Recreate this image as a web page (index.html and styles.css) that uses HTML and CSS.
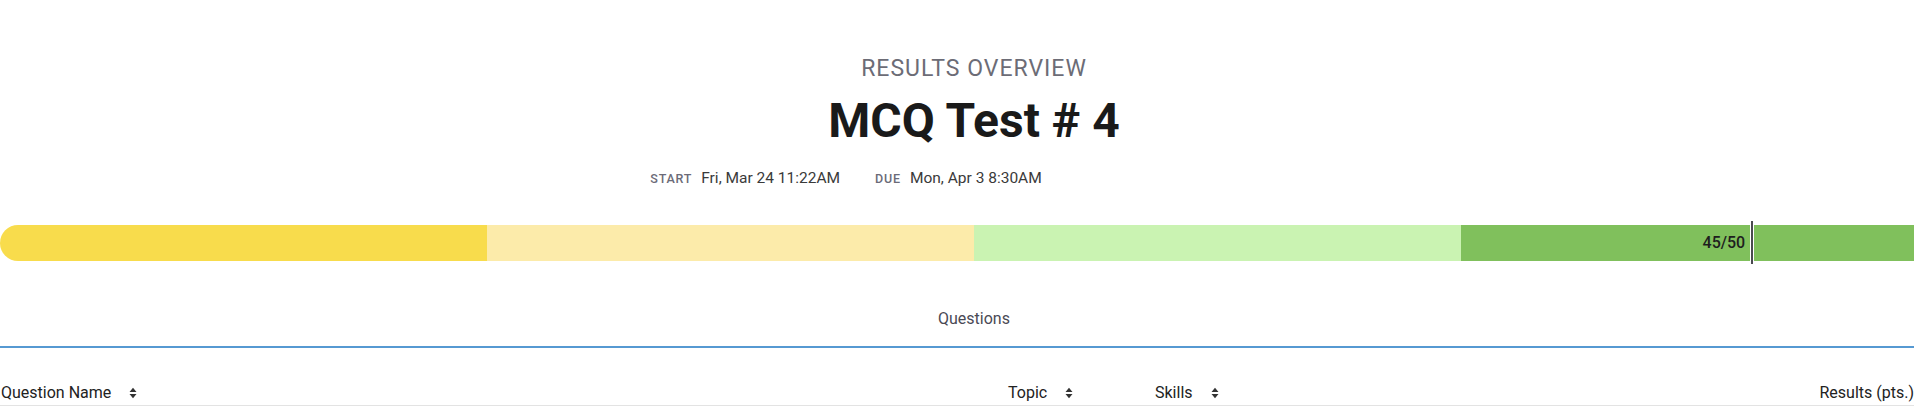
FILE: index.html
```html
<!DOCTYPE html>
<html lang="en">
<head>
<meta charset="utf-8">
<title>Results Overview</title>
<link rel="stylesheet" href="styles.css">
</head>
<body>
<div class="page">
  <header class="header">
    <div class="eyebrow">RESULTS OVERVIEW</div>
    <h1 class="title">MCQ Test # 4</h1>
    <div class="dates">
      <span class="date-item"><span class="date-label">START</span><span class="date-value">Fri, Mar 24 11:22AM</span></span>
      <span class="date-item"><span class="date-label">DUE</span><span class="date-value">Mon, Apr 3 8:30AM</span></span>
    </div>
  </header>

  <div class="bar">
    <div class="seg seg-1"></div>
    <div class="seg seg-2"></div>
    <div class="seg seg-3"></div>
    <div class="seg seg-4"></div>
    <div class="marker" style="left: 90%;"><span class="score">45/50</span></div>
  </div>

  <nav class="tabs">
    <div class="tab active">Questions</div>
  </nav>

  <div class="table-head">
    <div class="th">Question Name <svg class="sort" viewBox="0 0 8 12" width="8" height="12"><path d="M0.5 5 L4 0.8 L7.5 5 Z M0.5 7 L4 11.2 L7.5 7 Z"/></svg></div>
    <div class="th">Topic <svg class="sort" viewBox="0 0 8 12" width="8" height="12"><path d="M0.5 5 L4 0.8 L7.5 5 Z M0.5 7 L4 11.2 L7.5 7 Z"/></svg></div>
    <div class="th">Skills <svg class="sort" viewBox="0 0 8 12" width="8" height="12"><path d="M0.5 5 L4 0.8 L7.5 5 Z M0.5 7 L4 11.2 L7.5 7 Z"/></svg></div>
    <div class="th th-right">Results (pts.)</div>
  </div>
</div>
</body>
</html>
```

FILE: styles.css
```css
html, body {
  margin: 0;
  padding: 0;
  background: #ffffff;
  overflow: hidden;
}

body {
  font-family: Roboto, "Liberation Sans", Arial, sans-serif;
  color: #222222;
}

.page {
  width: 1948px;
}

.header {
  display: flex;
  flex-direction: column;
  align-items: center;
  padding-top: 56px;
}

.eyebrow {
  font-size: 23px;
  line-height: 26px;
  color: #6c6c76;
  letter-spacing: 1px;
}

.title {
  margin: 11px 0 0;
  font-size: 48px;
  line-height: 56px;
  font-weight: 700;
  color: #1a1a1a;
}

.dates {
  align-self: flex-start;
  width: 1692px;
  margin-top: 20px;
  display: flex;
  justify-content: center;
  gap: 35px;
  height: 18px;
  align-items: baseline;
}

.date-item {
  display: flex;
  align-items: baseline;
  gap: 9px;
}

.date-label {
  font-size: 12.5px;
  font-weight: 500;
  letter-spacing: 0.8px;
  color: #6b6b78;
}

.date-value {
  font-size: 15.5px;
  line-height: 18px;
  color: #3a3a3a;
}

.bar {
  position: relative;
  margin-top: 38px;
  height: 36px;
  display: flex;
  border-radius: 18px;
}

.seg {
  flex: 1;
}

.seg-1 {
  background: #f8dc4c;
  border-radius: 18px 0 0 18px;
}

.seg-2 {
  background: #fcebaa;
}

.seg-3 {
  background: #caf3b2;
}

.seg-4 {
  background: #80c05c;
  border-radius: 0 18px 18px 0;
}

.marker {
  position: absolute;
  top: -4px;
  width: 2px;
  height: 43px;
  margin-left: -3px;
  background: #4a4a4f;
  border-left: 1px solid #ffffff;
  border-right: 1px solid #ffffff;
}

.score {
  position: absolute;
  right: 8px;
  top: 13px;
  font-size: 16px;
  line-height: 18px;
  font-weight: 500;
  color: #1e1e1e;
}

.tabs {
  margin-top: 48px;
  display: flex;
  justify-content: center;
  border-bottom: 2px solid #5699d2;
}

.tab {
  font-size: 16px;
  line-height: 20px;
  color: #4a4a55;
  padding-bottom: 17px;
}

.table-head {
  display: grid;
  grid-template-columns: 1007px 147px 1fr auto;
  padding: 35px 34px 2px 1px;
  border-bottom: 1px solid #e3e3e3;
}

.th {
  display: flex;
  align-items: center;
  gap: 18px;
  font-size: 16px;
  line-height: 20px;
  color: #222222;
}

.th-right {
  justify-content: flex-end;
}

.sort {
  fill: #333333;
  display: block;
}
```
